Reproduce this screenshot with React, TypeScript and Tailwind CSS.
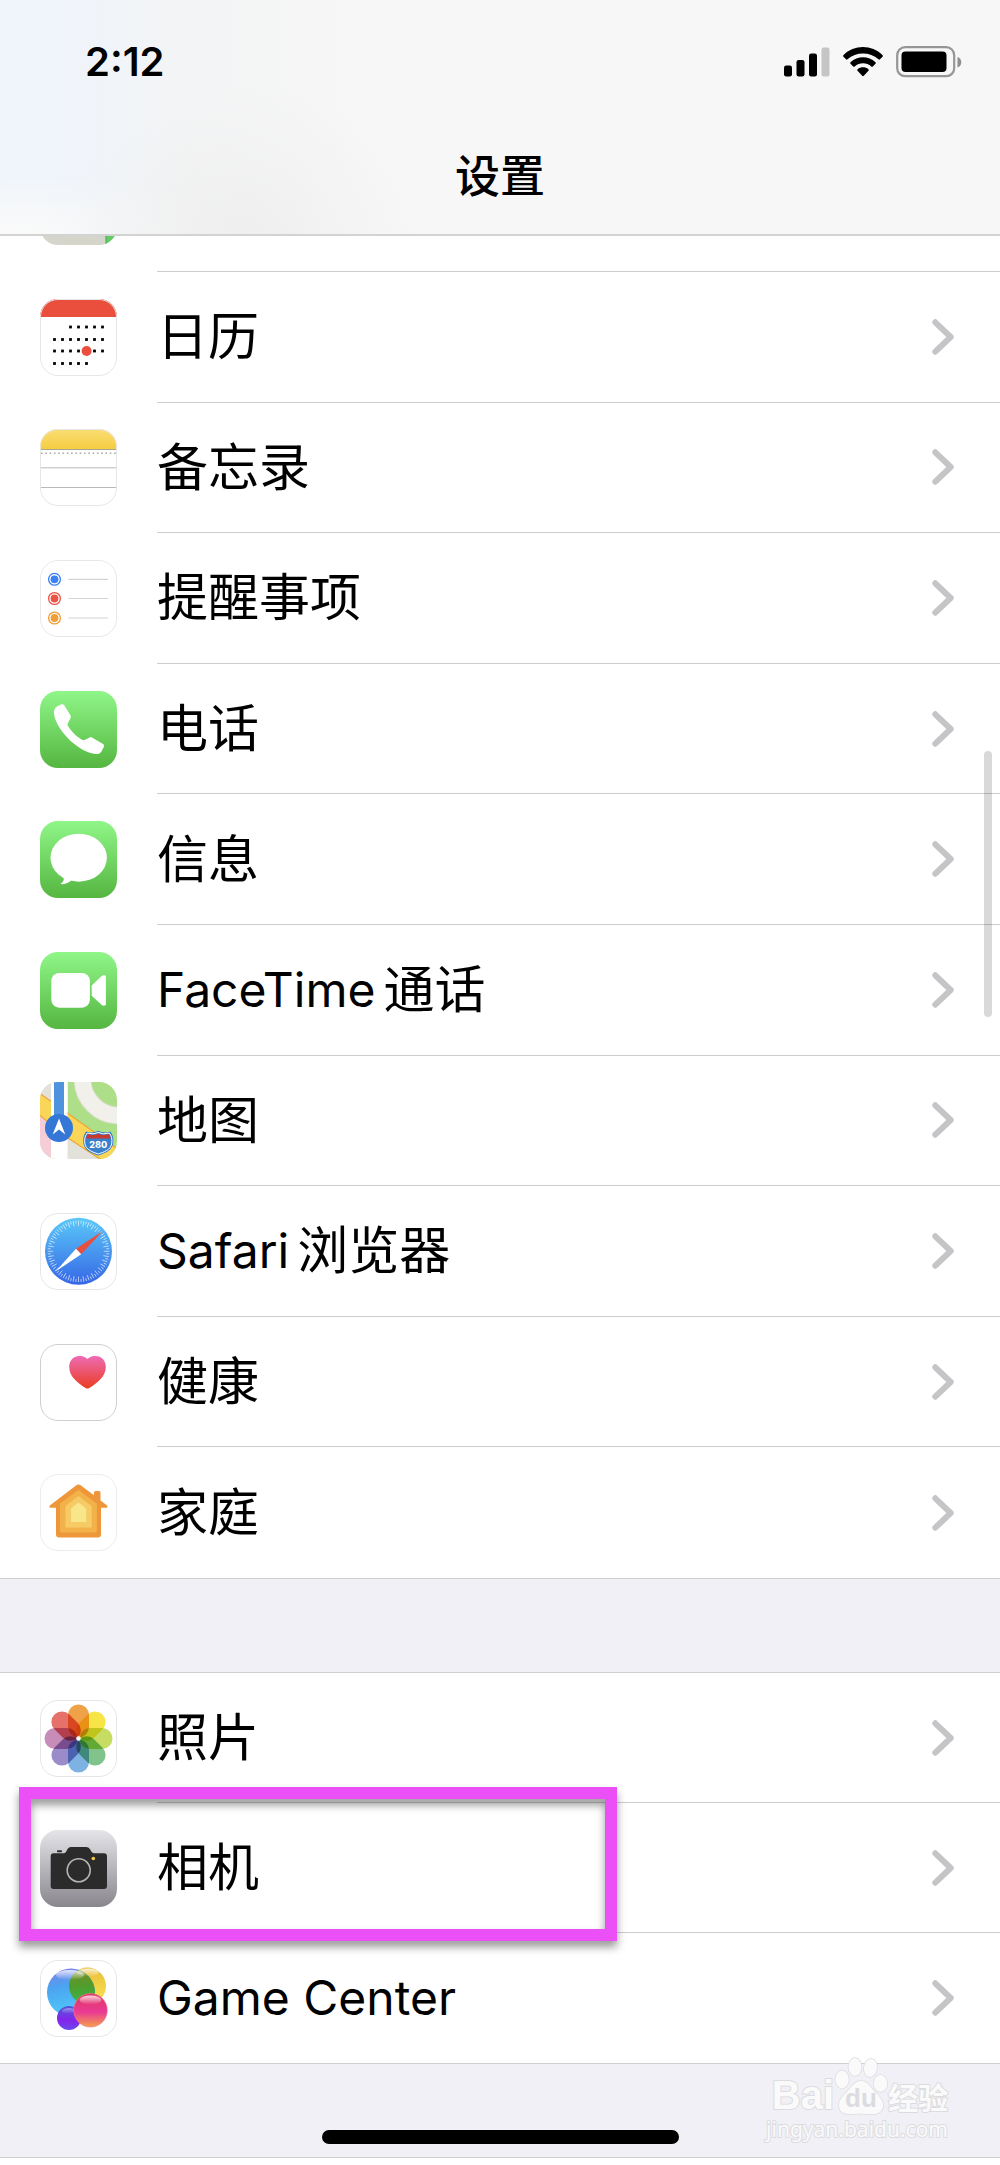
import React from 'react';

const SANS = "font-['Inter','Noto_Sans_CJK_SC',sans-serif]";

interface IconProps {
  children: React.ReactNode;
  border?: string;
}

// every app icon is drawn on a 77 x 77 tile
const Tile: React.FC<IconProps> = ({ children, border }) => (
  <svg className="size-[77px] shrink-0" viewBox="0 0 77 77" aria-hidden="true">
    <defs>
      <clipPath id="tile">
        <rect width="77" height="77" rx="18" />
      </clipPath>
    </defs>
    <g clipPath="url(#tile)">{children}</g>
    {border && <rect x="0.5" y="0.5" width="76" height="76" rx="17.5" fill="none" stroke={border} />}
  </svg>
);

const GreenTile: React.FC<{ id: string; children: React.ReactNode }> = ({ id, children }) => (
  <Tile>
    <linearGradient id={id} x1="0" y1="0" x2="0" y2="1">
      <stop offset="0" stopColor="#8ff688" />
      <stop offset="1" stopColor="#55b640" />
    </linearGradient>
    <rect width="77" height="77" fill={`url(#${id})`} />
    {children}
  </Tile>
);

const CALENDAR_DOTS = [
  { y: 28, xs: [30.5, 38.5, 46.5, 54.5, 62.5] },
  { y: 40.5, xs: [14.5, 22.5, 30.5, 38.5, 46.5, 54.5, 62.5] },
  { y: 52, xs: [14.5, 22.5, 30.5, 38.5, 54.5, 62.5] },
  { y: 64.5, xs: [14.5, 22.5, 30.5, 38.5, 46.5] },
];

const CalendarIcon = () => (
  <Tile border="#e6e6e6">
    <rect width="77" height="77" fill="#fff" />
    <rect width="77" height="18" fill="#ea4e3d" />
    {CALENDAR_DOTS.map((row) =>
      row.xs.map((x) => <rect key={`${x}-${row.y}`} x={x - 1.4} y={row.y - 1.4} width="2.8" height="2.8" />)
    )}
    <circle cx="46.6" cy="52" r="5" fill="#ea4e3d" />
    <path d="M0.500 18V18A17.500 17.500 0 0 1 18 0.500H59A17.500 17.500 0 0 1 76.500 18" fill="none" stroke="#ea4e3d" />
  </Tile>
);

const NotesIcon = () => (
  <Tile border="#e6e6e6">
    <linearGradient id="notes" x1="0" y1="0" x2="0" y2="1">
      <stop offset="0" stopColor="#f9de75" />
      <stop offset="1" stopColor="#f6cd42" />
    </linearGradient>
    <rect width="77" height="77" fill="#fff" />
    <rect width="77" height="20" fill="url(#notes)" />
    <path d="M0 20.5h77" stroke="#aaa48c" />
    <path d="M1 24.3h76" stroke="#aaa" strokeWidth="1.5" strokeDasharray="1.6 2.7" />
    <path d="M0 38.8h77M0 58.5h77" stroke="#b9b9bb" />
  </Tile>
);

const RemindersIcon = () => (
  <Tile border="#e8e8e8">
    <rect width="77" height="77" fill="#fff" />
    {[
      { y: 19.3, color: '#3b80f5' },
      { y: 38.5, color: '#eb5345' },
      { y: 58, color: '#f19d38' },
    ].map((item) => (
      <g key={item.y}>
        <circle cx="14.5" cy={item.y} r="5.9" fill="none" stroke={item.color} strokeWidth="1.3" />
        <circle cx="14.5" cy={item.y} r="3.9" fill={item.color} />
        <path d={`M28.5 ${item.y}h39.5`} stroke="#d4d4d6" strokeWidth="1.2" />
      </g>
    ))}
  </Tile>
);

const PhoneIcon = () => (
  <GreenTile id="phone">
    <path
      fill="#fff"
      d="M17 15.5 21 13.5C22.5 12.8 23.6 13.2 24.4 14.4L30.6 24.6C31 25.5 30.9 26.3 30.4 27.2L27.8 32.6C27.5 33.4 27.5 34 27.9 34.7C30.8 39.8 37 46.2 42.6 49C43.4 49.4 43.8 49.4 44.6 49L49.6 46.6C50.6 46.1 51.5 46.2 52.4 46.7L62.3 52.6C64 53.6 64.4 54.6 63.7 56.2L61.6 60.2C60 62.8 57.5 63.4 54 62.8C36 59.5 15.5 37.5 14 22.5C13.8 19 14.5 17 17 15.5Z"
    />
  </GreenTile>
);

const MessagesIcon = () => (
  <GreenTile id="messages">
    <ellipse cx="38.7" cy="36.7" rx="28.2" ry="24" fill="#fff" />
    <path d="M22 54c3 3.500 2 6.500-1.600 9 5 .8 9-1.500 12-4.500z" fill="#fff" />
  </GreenTile>
);

const FaceTimeIcon = () => (
  <GreenTile id="facetime">
    <rect x="11.3" y="21" width="38.600" height="34.700" rx="8" fill="#fff" />
    <path d="M51.700 33.600 61.500 24.200Q63.500 22.600 65.900 23.800V53Q63.500 54.500 61.500 52.800L51.700 43.800Z" fill="#fff" />
  </GreenTile>
);

const MapsIcon = () => (
  <Tile>
    <rect width="77" height="77" fill="#acdf87" />
    <rect width="28" height="77" fill="#e2e2da" />
    <circle cx="79" cy="-3" r="36.5" fill="none" stroke="#d9dcc8" strokeWidth="18" />
    <circle cx="79" cy="-3" r="36.500" fill="none" stroke="#f2f0eb" strokeWidth="16" />
    <path d="M0 33 28 56 60 78H0Z" fill="#e2e2da" />
    <path d="M0 33 12 41V77H0Z" fill="#f6ccd6" />
    <path d="M-2 10 79 68V91L60 77 28 56-2 32Z" fill="#f9d657" stroke="#efa63c" strokeWidth="1.200" />
    <rect x="11" width="16.500" height="77" fill="#fff" />
    <rect x="14" width="10" height="36" fill="#4f93df" />
    <circle cx="19" cy="46" r="14" fill="#3477d7" />
    <path d="M19 36.500 25.300 52.500 19 47.500 12.700 52.500Z" fill="#fff" />
    <g transform="translate(58.300 61)">
      <path
        d="M-12-11.500Q-6-9.500 0-12Q6-9.500 12-11.500Q16-7 14.800 1C13 8 6 10.500 0 12.500C-6 10.500-13 8-14.800 1Q-16-7-12-11.500Z"
        fill="#3477c8"
      />
      <path
        d="M-11-10Q-5-8 0-10.500Q5-8 11-10Q14.500-6 13.400 1C12 7 6 9 0 11C-6 9-12 7-13.400 1Q-14.500-6-11-10Z"
        fill="#3b80cd"
        stroke="#fff"
        strokeWidth="1"
      />
      <path d="M-10.500-9Q-5-7 0-9.300Q5-7 10.500-9L12.500-4.500H-12.500Z" fill="#c63a32" />
      <text y="4.500" textAnchor="middle" fill="#fff" className="font-['Inter',sans-serif] text-[9px] font-extrabold">
        280
      </text>
    </g>
  </Tile>
);

const SafariIcon = () => (
  <Tile border="#e6e6e6">
    <linearGradient id="safari" x1="0" y1="0" x2="0" y2="1">
      <stop offset="0" stopColor="#5ac8f8" />
      <stop offset="1" stopColor="#3667e6" />
    </linearGradient>
    <rect width="77" height="77" fill="#fff" />
    <circle cx="38.5" cy="38.300" r="33.500" fill="url(#safari)" />
    {Array.from({ length: 72 }, (_, i) => (
      <path
        key={i}
        d={i % 2 ? 'M38.500 7.500v3' : 'M38.500 7.500v5.500'}
        stroke="#fff"
        strokeWidth="0.700"
        opacity="0.850"
        transform={`rotate(${i * 5} 38.500 38.300)`}
      />
    ))}
    <path d="M62.800 18 36 35.800 41.200 41.200Z" fill="#ea4e3d" />
    <path d="M15.500 58.500 36 35.800 41.200 41.200Z" fill="#fff" />
  </Tile>
);

const HealthIcon = () => (
  <Tile border="#cfcfd1">
    <linearGradient id="health" x1="0" y1="0" x2="0" y2="1">
      <stop offset="0" stopColor="#ee6bb4" />
      <stop offset="1" stopColor="#ea3d22" />
    </linearGradient>
    <rect width="77" height="77" fill="#fff" />
    <path
      d="M47.400 15C44.800 12.500 42 12 39.500 12C33.500 12 29.200 16.500 29.200 23C29.200 32.500 38 39.500 45.600 43.900Q47.400 44.900 49.200 43.900C57 39.500 65.800 32.500 65.800 23C65.800 16.500 61.500 12 55.500 12C53 12 50 12.500 47.400 15Z"
      fill="url(#health)"
    />
  </Tile>
);

const HomeIcon = () => (
  <Tile border="#ececec">
    <rect width="77" height="77" fill="#fff" />
    <path
      d="M38.500 10.500Q39.800 10.500 41 11.500L54 21.300V18.500Q54 17 55.500 17H59Q60.500 17 60.500 18.500V26.500L67.200 31.500Q68 33.500 66.500 33.700H61V60.500Q61 63.500 58 63.500H19Q16 63.500 16 60.500V33.700H10.500Q9 33.500 9.800 31.500L36 11.500Q37.200 10.500 38.500 10.500Z"
      fill="#ee973a"
    />
    <path d="M38.500 16 56.800 29.500V56.500Q56.800 58.600 54.800 58.600H22Q20 58.600 20 56.500V29.500Z" fill="#f3b14a" />
    <path d="M38.500 22 51.700 32V53.500H25.500V32Z" fill="#f6cb66" />
    <path d="M38.500 28.500 46.200 34.500V48H31V34.500Z" fill="#fae68a" />
  </Tile>
);

const PETALS = ['#f0a24a', '#f7e446', '#c6dc62', '#80c48c', '#7eb2e2', '#998cc8', '#c78cb8', '#e6706a'];

const PhotosIcon = () => (
  <Tile border="#e6e6e6">
    <rect width="77" height="77" fill="#fff" />
    {PETALS.map((color, i) => (
      <rect
        key={color}
        x="28"
        y="4.500"
        width="21"
        height="33"
        rx="10.500"
        fill={color}
        className="mix-blend-multiply"
        transform={`rotate(${i * 45} 38.500 38.500)`}
      />
    ))}
    <circle cx="38.500" cy="38.500" r="2.200" fill="#fff" />
  </Tile>
);

const CameraIcon = () => (
  <Tile>
    <linearGradient id="camera" x1="0" y1="0" x2="0" y2="1">
      <stop offset="0" stopColor="#e5e4e9" />
      <stop offset="1" stopColor="#89878d" />
    </linearGradient>
    <rect width="77" height="77" fill="url(#camera)" />
    <rect x="17" y="20.200" width="5" height="2" rx="0.800" fill="#2b2b2b" />
    <path
      d="M13.500 23.300H24Q25.800 23 26.800 20.500Q28 17 31 17H46.500Q49 17 50.200 19.500Q51.500 23 53.500 23.300H64Q67 23.300 67 26.300V56Q67 59 64 59H13.500Q10.700 59 10.700 56V26.300Q10.700 23.300 13.500 23.300Z"
      fill="#2b2b2b"
    />
    <circle cx="38.700" cy="40.300" r="11.500" fill="none" stroke="#b4b4b6" strokeWidth="1.600" />
    <circle cx="53.300" cy="28.500" r="1.800" fill="#f5c945" />
  </Tile>
);

const GameCenterIcon = () => (
  <Tile border="#e6e6e6">
    <defs>
      <linearGradient id="gc-blue" x1="0.300" y1="0" x2="0.500" y2="1">
        <stop offset="0" stopColor="#7d82ea" />
        <stop offset="0.350" stopColor="#4ba3f0" />
        <stop offset="1" stopColor="#50cdfa" />
      </linearGradient>
      <linearGradient id="gc-yellow" x1="0" y1="0" x2="0" y2="1">
        <stop offset="0" stopColor="#e8bd3c" />
        <stop offset="1" stopColor="#fbe64e" />
      </linearGradient>
      <linearGradient id="gc-green" x1="0" y1="0" x2="0" y2="1">
        <stop offset="0" stopColor="#7d8a28" />
        <stop offset="0.500" stopColor="#4f9d2c" />
        <stop offset="1" stopColor="#3eb54d" />
      </linearGradient>
      <linearGradient id="gc-pink" x1="0" y1="0" x2="0" y2="1">
        <stop offset="0" stopColor="#e0355c" />
        <stop offset="0.550" stopColor="#ea3a95" />
        <stop offset="1" stopColor="#f5a04a" />
      </linearGradient>
      <linearGradient id="gc-purple" x1="0" y1="0" x2="0" y2="1">
        <stop offset="0" stopColor="#4f55d8" />
        <stop offset="0.600" stopColor="#8424ea" />
        <stop offset="1" stopColor="#6a4af0" />
      </linearGradient>
      <linearGradient id="gc-shine" x1="0" y1="0" x2="0" y2="1">
        <stop offset="0" stopColor="#fff" stopOpacity="0.800" />
        <stop offset="1" stopColor="#fff" stopOpacity="0" />
      </linearGradient>
      <clipPath id="gc-clip">
        <circle cx="31" cy="32.500" r="24" />
      </clipPath>
    </defs>
    <rect width="77" height="77" fill="#fff" />
    <circle cx="47.500" cy="26" r="18.500" fill="url(#gc-yellow)" />
    <circle cx="31" cy="32.500" r="24" fill="url(#gc-blue)" />
    <circle cx="47.500" cy="26" r="18.500" fill="url(#gc-green)" clipPath="url(#gc-clip)" />
    <ellipse cx="30" cy="15" rx="14" ry="5" fill="url(#gc-shine)" />
    <ellipse cx="48" cy="12.500" rx="11" ry="4" fill="url(#gc-shine)" />
    <circle cx="29" cy="58" r="12" fill="url(#gc-purple)" />
    <ellipse cx="29" cy="51" rx="7" ry="3" fill="url(#gc-shine)" opacity="0.500" />
    <circle cx="50.500" cy="50.300" r="16.800" fill="url(#gc-pink)" stroke="#ee7a94" strokeWidth="0.600" />
    <ellipse cx="50.500" cy="40" rx="11" ry="4.500" fill="url(#gc-shine)" />
  </Tile>
);

const Chevron = () => (
  <svg className="h-9 w-[22px] shrink-0" viewBox="0 0 22 36" fill="none" aria-hidden="true">
    <path d="M3.300 3.300 18.700 18 3.300 32.700" stroke="#c5c5c7" strokeWidth="6" strokeLinecap="round" strokeLinejoin="round" />
  </svg>
);

const StatusIcons = () => (
  <div className="flex items-center gap-[13px]">
    <svg className="h-[30px] w-[46px]" viewBox="0 0 46 30" aria-label="信号">
      <rect x="0" y="18.500" width="8" height="11" rx="2.200" />
      <rect x="12.500" y="13" width="8" height="16.500" rx="2.200" />
      <rect x="25" y="6.500" width="8" height="23" rx="2.200" />
      <rect x="37.500" y="0.500" width="8" height="29" rx="2.200" fill="#c5c5c5" />
    </svg>
    <svg className="h-[30px] w-10" viewBox="0 0 40 30" aria-label="Wi-Fi">
      <path d="M0.400 8.200C11-2.600 29-2.600 39.600 8.200Q40.200 9 39.500 9.700L37 12.300Q36.300 13 35.500 12.300C27 4.500 13 4.500 4.500 12.300Q3.700 13 3 12.300L0.500 9.700Q-.2 9 .4 8.200Z" />
      <path d="M7.500 15.300C14.500 8.600 25.500 8.600 32.500 15.300Q33.200 16 32.500 16.700L29.800 19.400Q29 20 28.300 19.400C23.500 15.300 16.500 15.300 11.700 19.400Q11 20 10.200 19.400L7.500 16.700Q6.800 16 7.500 15.300Z" />
      <path d="M14.600 22.300C17.700 19.700 22.300 19.700 25.400 22.300Q26.200 23 25.500 23.800L20.800 28.800Q20 29.500 19.200 28.800L14.500 23.800Q13.800 23 14.600 22.300Z" />
    </svg>
    <svg className="h-8 w-[66px]" viewBox="0 0 66 32" aria-label="电池">
      <rect x="1.200" y="1.200" width="57" height="29" rx="8" fill="none" stroke="#969696" strokeWidth="2.200" />
      <rect x="5.500" y="5.500" width="45" height="20.500" rx="4" />
      <path d="M61.500 11C66.500 12.500 66.500 20 61.500 21.500Z" fill="#8e8e8e" />
    </svg>
  </div>
);

interface RowItem {
  latin?: string;
  label?: string;
  Icon: React.FC;
  highlighted?: boolean;
}

const APPS: RowItem[] = [
  { label: '日历', Icon: CalendarIcon },
  { label: '备忘录', Icon: NotesIcon },
  { label: '提醒事项', Icon: RemindersIcon },
  { label: '电话', Icon: PhoneIcon },
  { label: '信息', Icon: MessagesIcon },
  { latin: 'FaceTime', label: '通话', Icon: FaceTimeIcon },
  { label: '地图', Icon: MapsIcon },
  { latin: 'Safari', label: '浏览器', Icon: SafariIcon },
  { label: '健康', Icon: HealthIcon },
  { label: '家庭', Icon: HomeIcon },
];

const MEDIA: RowItem[] = [
  { label: '照片', Icon: PhotosIcon },
  { label: '相机', Icon: CameraIcon, highlighted: true },
  { latin: 'Game Center', Icon: GameCenterIcon },
];

const SettingsRow: React.FC<RowItem> = ({ latin, label, Icon, highlighted }) => (
  <li className="group relative">
    <a href="#" className="flex h-full items-center gap-10 pl-10">
      <Icon />
      <span className="flex flex-1 items-center justify-between self-stretch border-b border-[#cdcdcf] pr-[46px] group-last:border-b-0">
        <span className="flex items-center gap-2 leading-none">
          {latin && <span className="text-[48px]">{latin}</span>}
          {label && <span className="text-[51px]">{label}</span>}
        </span>
        <Chevron />
      </span>
    </a>
    {highlighted && (
      <div className="pointer-events-none absolute -top-4 -bottom-2 left-[19px] z-10 w-[598px] border-12 border-[#eb50f7] drop-shadow-[0_6px_4px_rgba(0,0,0,0.4)]" />
    )}
  </li>
);

const Watermark = () => (
  <div className="absolute right-[52px] bottom-[14px] text-[#fafafa] [-webkit-text-stroke:2px_#dcdce0] [paint-order:stroke_fill]">
    <div className="flex items-end justify-end font-['Liberation_Sans','Noto_Sans_CJK_SC',sans-serif] leading-none font-bold">
      <span className="text-[40px]">Bai</span>
      <span className="relative h-[58px] w-[54px]">
        <svg className="size-full" viewBox="0 0 54 58" fill="#fafafa" stroke="#dcdce0" strokeWidth="1.500" aria-hidden="true">
          <ellipse cx="8" cy="22.500" rx="6.700" ry="9" />
          <ellipse cx="21" cy="10" rx="6.500" ry="9" />
          <ellipse cx="36.500" cy="11" rx="6.500" ry="9" transform="rotate(8 36.500 11)" />
          <ellipse cx="46.500" cy="26.500" rx="6.700" ry="8.500" />
          <path d="M27 24C34 24 36.500 30 41 35C46 40 50 44 49 50C47.500 57 42 58 27 56.500C12 58 6.500 57 5 50C4 44 8 40 13 35C17.500 30 20 24 27 24Z" />
        </svg>
        <span className="absolute inset-x-0 bottom-1 text-center text-[26px] text-[#dcdce0] [-webkit-text-stroke:0px]">du</span>
      </span>
      <span className="pb-px text-[30px]">经验</span>
    </div>
    <div className="font-['Noto_Sans',sans-serif] text-[21px] leading-7">jingyan.baidu.com</div>
  </div>
);

export default function App() {
  return (
    <div className={`relative bg-white text-black ${SANS}`}>
      <header className="border-b-2 border-[#d3d3d3] bg-[#f7f7f7] bg-[radial-gradient(circle_at_24%_110%,#eeeeee_0%,transparent_22%),radial-gradient(ellipse_at_0%_100%,#fafaf9_0%,transparent_18%),linear-gradient(90deg,#f0f5fb_0%,#f0f4f9_10%,#f3f4f5_18%,#f7f7f7_36%)]">
        <div className="flex items-center justify-between pt-[37px] pr-[38px] pl-[85px]">
          <span className="text-[40px] leading-[50px] font-semibold">2:12</span>
          <StatusIcons />
        </div>
        <h1 className="pt-[60px] pb-[27px] text-center text-[45px] leading-[60px] font-medium">设置</h1>
      </header>

      <main>
        {/* row that is scrolled under the header */}
        <div className="flex h-9 items-end overflow-hidden">
          <div className="flex h-[131px] flex-1 items-center gap-10 pl-10">
            <Tile>
              <rect width="77" height="77" fill="#d5d5cb" />
              <rect x="66" width="11" height="77" fill="#63cc66" />
              <path d="M66 0v77" stroke="#4aa34e" />
            </Tile>
            <span className="flex-1 self-stretch border-b border-[#cdcdcf]" />
          </div>
        </div>

        <ul className="grid min-h-[1306px] auto-rows-fr">
          {APPS.map((item) => (
            <SettingsRow key={item.label} {...item} />
          ))}
        </ul>

        <div className="h-[95px] border-y border-[#cfcfd2] bg-[#f0f0f6]" />

        <ul className="grid min-h-[390px] auto-rows-fr">
          {MEDIA.map((item) => (
            <SettingsRow key={item.label ?? item.latin} {...item} />
          ))}
        </ul>
      </main>

      <footer className="relative mb-2 flex justify-center border-y border-[#cfcfd2] bg-[#f0f0f6] pt-[66px] pb-[13px]">
        <div className="h-[14px] w-[357px] rounded-full bg-black" />
        <Watermark />
      </footer>

      <div className="absolute top-[751px] right-2 h-[266px] w-2 rounded-full bg-black/15" />
    </div>
  );
}
